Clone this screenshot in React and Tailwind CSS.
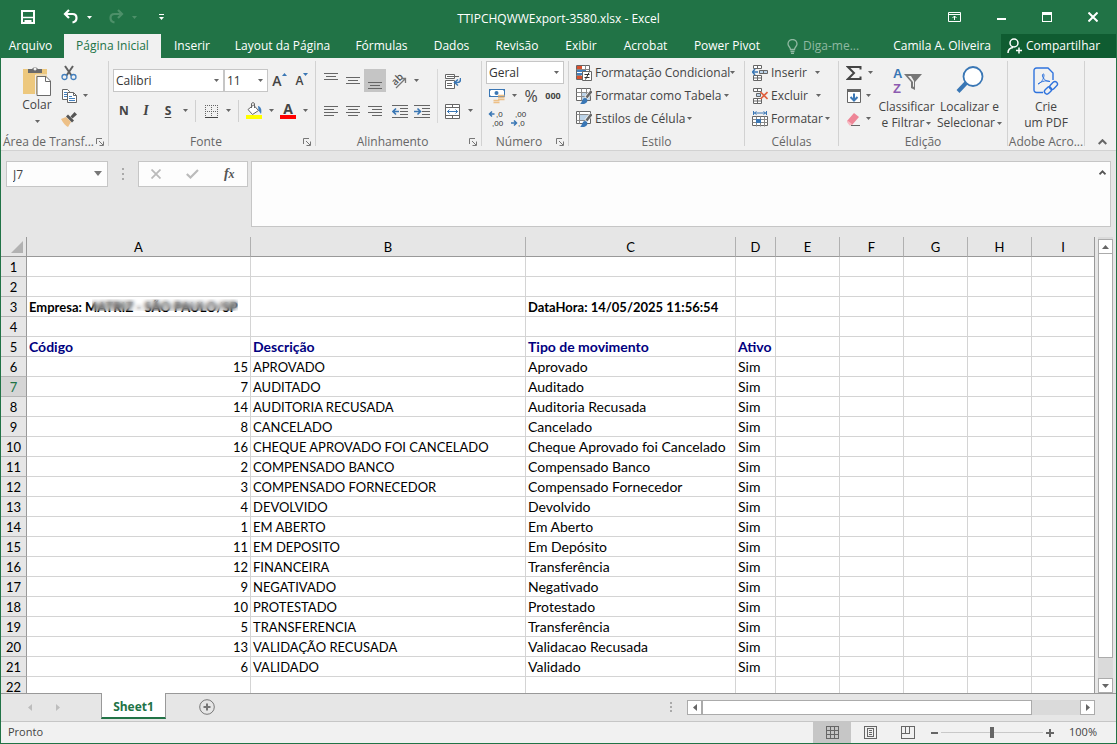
import { clsx } from 'clsx';

const columns = [
  { name: 'A', width: 'w-[224px]' },
  { name: 'B', width: 'w-[275px]' },
  { name: 'C', width: 'w-[210px]' },
  { name: 'D', width: 'w-10' },
  { name: 'E', width: 'w-16' },
  { name: 'F', width: 'w-16' },
  { name: 'G', width: 'w-16' },
  { name: 'H', width: 'w-16' },
  { name: 'I', width: '' },
];

const records = [
  [15, 'APROVADO', 'Aprovado'],
  [7, 'AUDITADO', 'Auditado'],
  [14, 'AUDITORIA RECUSADA', 'Auditoria Recusada'],
  [8, 'CANCELADO', 'Cancelado'],
  [16, 'CHEQUE APROVADO FOI CANCELADO', 'Cheque Aprovado foi Cancelado'],
  [2, 'COMPENSADO BANCO', 'Compensado Banco'],
  [3, 'COMPENSADO FORNECEDOR', 'Compensado Fornecedor'],
  [4, 'DEVOLVIDO', 'Devolvido'],
  [1, 'EM ABERTO', 'Em Aberto'],
  [11, 'EM DEPOSITO', 'Em Depósito'],
  [12, 'FINANCEIRA', 'Transferência'],
  [9, 'NEGATIVADO', 'Negativado'],
  [10, 'PROTESTADO', 'Protestado'],
  [5, 'TRANSFERENCIA', 'Transferência'],
  [13, 'VALIDAÇÃO RECUSADA', 'Validacao Recusada'],
  [6, 'VALIDADO', 'Validado'],
];

const tabs = [
  { label: 'Inserir', width: 'w-[62px]' },
  { label: 'Layout da Página', width: 'w-[119px]' },
  { label: 'Fórmulas', width: 'w-[79px]' },
  { label: 'Dados', width: 'w-[61px]' },
  { label: 'Revisão', width: 'w-[70px]' },
  { label: 'Exibir', width: 'w-[58px]' },
  { label: 'Acrobat', width: 'w-[71px]' },
  { label: 'Power Pivot', width: 'w-[92px]' },
];

/* ---------- small building blocks ---------- */

function Icon({ size = 'size-4', box = '0 0 16 16', children, ...rest }) {
  return (
    <svg className={clsx('shrink-0', size)} viewBox={box} fill="none" stroke="#666" aria-hidden="true" {...rest}>
      {children}
    </svg>
  );
}

function Caret({ className = 'text-[#666]' }) {
  return (
    <svg className={clsx('h-[3px] w-[5px] shrink-0', className)} viewBox="0 0 5 3" fill="currentColor" aria-hidden="true">
      <path d="M0 0h5L2.500 3z" />
    </svg>
  );
}

function Tool({ label, className = 'w-[22px]', children }) {
  return (
    <button type="button" aria-label={label} className={clsx('flex h-[23px] shrink-0 items-center justify-center', className)}>
      {children}
    </button>
  );
}

function Drop({ label, className = 'w-3' }) {
  return (
    <Tool label={label} className={className}>
      <Caret />
    </Tool>
  );
}

function Divider() {
  return <span className="mx-1 h-[22px] w-px shrink-0 bg-[#d0d0d0]" />;
}

function Combo({ label, value, className }) {
  return (
    <label className={clsx('relative block h-[23px] shrink-0', className)}>
      <select aria-label={label} className="h-full w-full appearance-none border border-[#c6c6c6] bg-white pl-[2px] text-[#333]">
        <option>{value}</option>
      </select>
      <span className="pointer-events-none absolute inset-y-0 right-[5px] flex items-center">
        <Caret />
      </span>
    </label>
  );
}

function Group({ label, launcher, className, children }) {
  return (
    <section className={clsx('flex h-[85px] shrink-0 flex-col border-r border-[#d2d2d2]', className)}>
      <div className="h-[77px]">{children}</div>
      <div className="flex h-2 items-center text-[#666]">
        <span className="flex-1 text-center leading-4 whitespace-nowrap">{label}</span>
        {launcher && (
          <button type="button" aria-label={`Opções de ${label}`} className="mr-1">
            <Icon size="size-2" box="0 0 8 8" stroke="#777">
              <path d="M.5 6V.5H6M3 3l4 4M7.500 3.500v4h-4" />
            </Icon>
          </button>
        )}
      </div>
    </section>
  );
}

function RowButton({ icon, label, gap = 'gap-[2px]' }) {
  return (
    <button type="button" className="flex h-[23px] items-center gap-[3px] whitespace-nowrap">
      {icon}
      <span className={clsx('flex items-center', gap)}>
        {label}
        <Caret />
      </span>
    </button>
  );
}

/* lines of text drawn at the given widths */
function Lines({ rows }) {
  return (
    <Icon shapeRendering="crispEdges">
      {rows.map(([x, y, w]) => (
        <path key={y} d={`M${x} ${y}.5h${w}`} />
      ))}
    </Icon>
  );
}

/* ---------- ribbon icons ---------- */

const PasteIcon = () => (
  <Icon size="h-8 w-7" box="0 0 28 32" stroke="none">
    <path d="M0 4h24v25H0z" fill="#edc87e" />
    <path d="M5 8V4h4a3.500 3.500 0 0 1 6 0h4v4z" fill="#6b6b6b" />
    <path d="M12 2.500a1.500 1.500 0 1 0 .1 0z" fill="#f1f1f1" />
    <path d="M14 11.500h9l4.500 4.500v14.500H14z" fill="#fff" stroke="#6b6b6b" />
    <path d="M22.500 11.500v5h5" stroke="#6b6b6b" fill="none" />
    <path d="M12.500 31V10H24" stroke="#f1f1f1" fill="none" />
  </Icon>
);

const CutIcon = () => (
  <Icon>
    <path d="M4 1l6.500 9.500M12 1L5.500 10.500" stroke="#606060" strokeWidth="2" />
    <circle cx="3.500" cy="12" r="2.500" stroke="#4480be" strokeWidth="1.300" />
    <circle cx="12.500" cy="12" r="2.500" stroke="#4480be" strokeWidth="1.300" />
  </Icon>
);

const CopyIcon = () => (
  <Icon>
    <path d="M1.500 1.500h5l2 2v8h-7z" fill="#fff" />
    <path d="M3 4.500h3M3 6.500h3M3 8.500h3" stroke="#4480be" />
    <path d="M6.500 4.500h6l3 3v7h-9z" fill="#fff" />
    <path d="M12.500 4.500v3h3" />
    <path d="M8 8.500h3M8 10.500h6M8 12.500h6" stroke="#4480be" />
  </Icon>
);

const BrushIcon = () => (
  <Icon stroke="none">
    <path d="M0 8l5-2 5 5-3 5c-2-1-5-4-7-8z" fill="#edc087" />
    <path d="M5 5.500l2-2 6 6-2 2z" fill="#555" />
    <path d="M9.500 5.500l4-4.500 2.500 2.500-4.500 4z" fill="#555" />
  </Icon>
);

const BorderIcon = () => (
  <Icon shapeRendering="crispEdges">
    <path d="M2 2.500h13M2 8.500h13M2.500 2v12M8.500 2v12M14.500 2v12" strokeDasharray="1 1" />
    <path d="M2 14.500h13" stroke="#444" />
  </Icon>
);

const BucketIcon = () => (
  <Icon size="h-[17px] w-4" box="0 0 16 17" stroke="none">
    <path d="M2 7.500l5.500-4.500 5 5.500-6 4z" fill="#fff" stroke="#666" />
    <path d="M5.500 6V1.500c0-1 3-1 3 0V6" stroke="#666" fill="none" />
    <path d="M12 4c3 .5 4 4 3 8l-2.500-3.500z" fill="#4480be" />
    <path d="M0 13h16v4H0z" fill="#ff0" />
  </Icon>
);

const OrientationIcon = () => (
  <Icon size="size-5" box="0 0 20 20">
    <text x="3" y="13" transform="rotate(-45 7 10)" fontSize="10" fontWeight="600" fill="#555" stroke="none">ab</text>
    <path d="M7 17l9-9M12 7.500h4.500V12" stroke="#777" strokeWidth="1.300" />
  </Icon>
);

const IndentIcon = ({ flip }) => (
  <Icon>
    <path d="M0 2.500h16M8 5.500h8M8 8.500h8M8 11.500h8M0 14.500h16" shapeRendering="crispEdges" />
    <path d={flip ? 'M0 8.500h6M3.500 5.500l3 3-3 3' : 'M1 8.500h6M4 5.500l-3 3 3 3'} stroke="#3a77b5" strokeWidth="1.600" />
  </Icon>
);

const WrapIcon = () => (
  <Icon>
    <path d="M.5 1.500h9v4h-9zM.5 7.500h9v8h-9z" fill="#fff" />
    <path d="M2 3.500h12M2 10.500h5M2 12.500h5" />
    <path d="M15.500 5v1.500c0 2-1 3-3 3H10M13 6.500l-3.500 3 3.500 3" stroke="#3a77b5" strokeWidth="1.500" />
  </Icon>
);

const MergeIcon = () => (
  <Icon>
    <path d="M.5 1.500h14v14H.5zM.5 4.500h14M.5 12.500h14M7.500 1.500v3M7.500 12.500v3" fill="#fff" />
    <path d="M2 8.500h11M4.500 6.500l-2 2 2 2M10.500 6.500l2 2-2 2" stroke="#3a77b5" />
  </Icon>
);

const MoneyIcon = () => (
  <Icon>
    <path d="M.5 1.500h15v7H.5z" fill="#fff" stroke="#3a77b5" />
    <path d="M0 1h3L0 4zM16 1h-3l3 3zM0 9h3L0 6z" fill="#3a77b5" stroke="none" />
    <circle cx="7.500" cy="5" r="2" fill="#3a77b5" stroke="none" />
    <path d="M9 7.500h6.500M9 9.500h6.500M9 11.500h6.500M4.500 12.500h6M4.500 14.500h6" stroke="#edc087" strokeWidth="1.500" />
  </Icon>
);

const DecimalIcon = ({ more }) => (
  <Icon size="h-5 w-[18px]" box="0 0 18 20" stroke="none" fill="#333" fontFamily="Liberation Sans" fontSize="8">
    <text x={more ? 8 : 5} y="8">{more ? ',0' : ',00'}</text>
    <text x={more ? 4 : 8} y="17">{more ? ',00' : ',0'}</text>
    <path
      d={more ? 'M1.500 5h5M4 2.500L1.500 5 4 7.500' : 'M1 14h5.500M4 11.500L6.500 14 4 16.500'}
      fill="none"
      stroke="#3a77b5"
      strokeWidth="1.500"
    />
  </Icon>
);

const ConditionalIcon = () => (
  <Icon>
    <path d="M.5.5h13v14H.5z" fill="#fff" />
    <path d="M1 1h5v3H1zM1 11h5v3H1z" fill="#d9502e" stroke="none" />
    <path d="M1 5h9v2H1zM1 8h5v2H1z" fill="#4480be" stroke="none" />
    <path d="M.5 4.500h13M9.500.5v4M.5 10.500h5" stroke="#888" />
    <path d="M6.500 6.500h9v9h-9z" fill="#fff" />
    <path d="M8.500 9.500h5M8.500 12.500h5M13 7.500l-3.500 7" stroke="#333" />
  </Icon>
);

const StyleIcon = ({ plain }) => (
  <Icon>
    <path d="M.5.5h14v12H.5z" fill="#fff" />
    <path d={plain ? 'M4 4h8v6H4z' : 'M5 4h9v8H5z'} fill="#bcd3e8" stroke="none" />
    <path d={plain ? 'M.5 3.500h14M3.500.5v12M.5 9.500h11' : 'M.5 4.500h14M.5 8.500h14M5.500.5v12M10.500.5v12'} stroke="#8a8a8a" />
    <path d="M15.500 3L10 10" stroke="#f1f1f1" strokeWidth="4" />
    <path d="M15.500 3L10.500 9.500" stroke="#666" strokeWidth="2.500" />
    <path d="M4 16c2-1 2-6 5-6 2 0 3 2 2 4-1.500 2-4 2.500-7 2z" fill="#3a77b5" stroke="none" />
  </Icon>
);

const InsertIcon = () => (
  <Icon>
    <path d="M1.500.5h8v3h-8zM5.500.5v3M1.500 10.500h8v5h-8zM5.500 10.500v5M1.500 13h8" fill="#fff" />
    <path d="M7.500 5.500h8v3h-8z" fill="#bcd3e8" />
    <path d="M11.500 5.500v3" />
    <path d="M0 7h6M3 4L.5 7 3 10" stroke="#3a77b5" strokeWidth="1.500" />
  </Icon>
);

const DeleteIcon = () => (
  <Icon>
    <path d="M1.500.5h8v3h-8zM5.500.5v3M1.500 10.500h8v5h-8zM5.500 10.500v5M1.500 13h8" fill="#fff" />
    <path d="M4.500 5.500h4v3h-4z" fill="#bcd3e8" />
    <path d="M8.500 4l7 7M15.500 4l-7 7" stroke="#e0603f" strokeWidth="1.600" />
  </Icon>
);

const FormatIcon = () => (
  <Icon>
    <path d="M1 2h13M1.500 0v4M14.500 0v4M4.500.5L2.500 2l2 1.500M11.500.5l2 1.500-2 1.500" stroke="#3a77b5" />
    <path d="M.5 5.500h15v9H.5z" fill="#fff" />
    <path d="M.5 8.500h15M.5 11.500h15M4.500 5.500v10M8.500 5.500v10M12.500 5.500v10" stroke="#888" />
    <path d="M4 8h5v4H4z" fill="#3a77b5" stroke="none" />
  </Icon>
);

const FillIcon = () => (
  <Icon>
    <path d="M1.500 1.500h13v13h-13z" fill="#fff" />
    <path d="M1 1h14v3H1z" fill="#666" stroke="none" />
    <path d="M8 5.500v7M4.500 9L8 12.500 11.500 9" stroke="#3a77b5" strokeWidth="2" />
  </Icon>
);

const EraserIcon = () => (
  <Icon stroke="none">
    <path d="M1 10l7-8 5 4-7 8H4z" fill="#ee8596" />
    <path d="M1.500 9.500L6 13l-1 1.500H3.500L1 11z" fill="#f7b9c2" />
    <path d="M5 14.500h9" stroke="#666" />
  </Icon>
);

const SortIcon = () => (
  <Icon size="h-[30px] w-[30px]" box="0 0 30 30" stroke="none" fontFamily="Liberation Sans" fontWeight="bold" fontSize="13">
    <text x="1" y="12" fill="#3a77b5">A</text>
    <text x="1" y="27" fill="#8c5bb0">Z</text>
    <path d="M12 8h18l-7 8v8l-4-2v-6z" fill="#777" />
    <path d="M16 10h3l3 5v6l-1-.5V16z" fill="#f1f1f1" />
  </Icon>
);

const FindIcon = () => (
  <Icon size="h-[30px] w-[30px]" box="0 0 30 30">
    <path d="M12 16L3 25.500" stroke="#3a77b5" strokeWidth="4" />
    <circle cx="18" cy="10.500" r="9.500" fill="#fff" stroke="#3a77b5" strokeWidth="1.800" />
  </Icon>
);

const PdfIcon = () => (
  <Icon size="h-[30px] w-[26px]" box="0 0 26 30" stroke="#2f73dd" strokeWidth="1.400">
    <path d="M10 25.500H3.500c-1.500 0-2.500-1-2.500-2.500V3.500C1 2 2 1 3.500 1H15l5 5v6M20 6v7" />
    <path d="M5 17c3-1 6-5 6-9 0-2-2-1-1.500 1 .8 3 4 6 7.500 5.500-3-1.500-8-.5-12 2.500z" strokeWidth="1" />
    <rect x="11" y="21" width="8" height="5" rx="2.500" transform="rotate(-45 15 23.500)" />
    <rect x="16" y="16" width="9" height="5" rx="2.500" transform="rotate(-45 20.500 18.500)" />
  </Icon>
);

/* ---------- page regions ---------- */

function TitleBar() {
  return (
    <header className="grid h-[34px] grid-cols-[1fr_auto_1fr] items-center text-white">
      <div className="flex items-center pl-5">
        <button type="button" aria-label="Salvar" className="mr-7">
          <Icon size="size-[14px]" box="0 0 14 14" stroke="#fff">
            <path d="M1 1h12v12H1z" strokeWidth="2" />
            <path d="M2 7.500h10" strokeWidth="1.500" />
            <path d="M3.500 10h7v4h-2v-2H6v2H3.500z" fill="#fff" stroke="none" />
          </Icon>
        </button>
        <button type="button" aria-label="Desfazer" className="mr-2">
          <Icon stroke="#fff" strokeWidth="2.200">
            <path d="M6 1L2 5l4 4M2 5h7.500c2.500 0 4 1.500 4 4s-1.500 4-4 4.500" />
          </Icon>
        </button>
        <Caret className="mr-4 text-white" />
        <button type="button" aria-label="Refazer" className="mr-2">
          <Icon stroke="#4d9069" strokeWidth="2.200">
            <path d="M10 1l4 4-4 4M14 5H6.500c-2.500 0-4 1.500-4 4s1.500 4 4 4.500" />
          </Icon>
        </button>
        <Caret className="mr-[22px] text-[#4d9069]" />
        <button type="button" aria-label="Personalizar" className="flex flex-col items-center gap-[2px]">
          <span className="h-px w-[5px] bg-white" />
          <Caret className="text-white" />
        </button>
      </div>
      <h1 className="pt-[3px]">TTIPCHQWWExport-3580.xlsx - Excel</h1>
      <div className="flex items-center justify-end gap-9 pr-[18px]">
        <button type="button" aria-label="Opções da faixa">
          <Icon size="h-[10px] w-[13px]" box="0 0 13 10" stroke="#fff">
            <path d="M.5.500h12v9H.5zM.5 2.500h12M6.500 8V4M4.500 6l2-2 2 2" />
          </Icon>
        </button>
        <button type="button" aria-label="Minimizar" className="flex h-[10px] w-[9px] items-end">
          <span className="mb-[2px] h-[2px] w-full bg-white" />
        </button>
        <button type="button" aria-label="Maximizar" className="h-[10px] w-[10px] border border-t-3 border-white" />
        <button type="button" aria-label="Fechar">
          <Icon size="size-[10px]" box="0 0 10 10" stroke="#fff" strokeWidth="2">
            <path d="M.5.500l9 9M9.500.500l-9 9" />
          </Icon>
        </button>
      </div>
    </header>
  );
}

function RibbonTabs() {
  return (
    <nav className="flex h-6 items-stretch whitespace-nowrap text-white">
      <button type="button" className="w-[63px] pr-1">Arquivo</button>
      <button type="button" className="w-[97px] bg-[#f1f1f1] text-[#217346]">Página Inicial</button>
      {tabs.map(({ label, width }) => (
        <button type="button" key={label} className={clsx('flex items-center justify-center', width)}>{label}</button>
      ))}
      <button type="button" className="ml-[14px] flex items-center gap-[5px] text-[#90b9a2]">
        <Icon size="h-[15px] w-[11px]" box="0 0 11 15" stroke="#90b9a2" strokeWidth="1.300">
          <path d="M3.500 10.500C3.500 8 1 7.500 1 5a4.500 4.500 0 0 1 9 0c0 2.500-2.500 3-2.500 5.500zM3.500 12.500h4M4 14.300h3" />
        </Icon>
        Diga-me...
      </button>
      <button type="button" className="mr-[10px] ml-auto">Camila A. Oliveira</button>
      <button type="button" className="flex w-[115px] items-center gap-1 bg-[#0f5c31] pl-[6px]">
        <Icon size="h-4 w-[15px]" box="0 0 15 16" stroke="#fff" strokeWidth="1.500">
          <circle cx="7" cy="5" r="4" />
          <path d="M1 15c0-3 2-5 5-5.500M9 12.500h6M12 9.500v6" />
        </Icon>
        Compartilhar
      </button>
    </nav>
  );
}

function Ribbon() {
  return (
    <div className="flex h-[93px] items-start border-b border-[#d2d2d2] bg-[#f1f1f1] pt-[3px] text-[#444]">
      <Group label="Área de Transf..." launcher className="w-[108px]">
        <div className="flex gap-1 pl-4">
          <button type="button" className="flex w-10 flex-col items-center pt-1 leading-4">
            <PasteIcon />
            Colar
            <span className="flex h-4 items-center"><Caret /></span>
          </button>
          <div>
            <Tool label="Recortar" className="w-4"><CutIcon /></Tool>
            <div className="flex">
              <Tool label="Copiar" className="w-4"><CopyIcon /></Tool>
              <Drop label="Opções de copiar" className="w-4" />
            </div>
            <Tool label="Pincel de formatação" className="w-4"><BrushIcon /></Tool>
          </div>
        </div>
      </Group>

      <Group label="Fonte" launcher className="w-[207px]">
        <div className="space-y-[7px] pt-2 pl-1">
          <div className="flex">
            <Combo label="Fonte" value="Calibri" className="w-[111px]" />
            <Combo label="Tamanho da fonte" value="11" className="w-11" />
            <Tool label="Aumentar fonte" className="w-[23px] text-sm font-semibold">
              A<svg className="mb-3 h-[3px] w-[5px]" viewBox="0 0 5 3" fill="#3a77b5"><path d="M0 3h5L2.500 0z" /></svg>
            </Tool>
            <Tool label="Diminuir fonte" className="w-[22px] text-xs font-semibold">
              A<Caret className="mb-3 text-[#3a77b5]" />
            </Tool>
          </div>
          <div className="flex items-center">
            <Tool label="Negrito"><b>N</b></Tool>
            <Tool label="Itálico"><i className="font-['Liberation_Serif'] text-sm font-bold">I</i></Tool>
            <Tool label="Sublinhado"><span className="font-bold underline underline-offset-2">S</span></Tool>
            <Drop label="Opções de sublinhado" />
            <Divider />
            <Tool label="Bordas"><BorderIcon /></Tool>
            <Drop label="Opções de bordas" />
            <Divider />
            <Tool label="Cor de preenchimento"><BucketIcon /></Tool>
            <Drop label="Opções de preenchimento" />
            <Tool label="Cor da fonte" className="w-[22px] flex-col">
              <span className="text-sm leading-3 font-bold">A</span>
              <span className="h-1 w-4 bg-[#f00]" />
            </Tool>
            <Drop label="Opções de cor" />
          </div>
        </div>
      </Group>

      <Group label="Alinhamento" launcher className="w-[166px]">
        <div className="flex pt-2 pl-1">
          <div className="w-[117px] space-y-[7px]">
            <div className="flex">
              <Tool label="Em cima"><Lines rows={[[1, 0, 14], [3, 3, 10], [1, 6, 14]]} /></Tool>
              <Tool label="No meio"><Lines rows={[[1, 4, 14], [3, 7, 10], [1, 10, 14]]} /></Tool>
              <Tool label="Embaixo" className="w-[22px] bg-[#c5c5c5]"><Lines rows={[[1, 9, 14], [3, 12, 10], [1, 15, 14]]} /></Tool>
              <Tool label="Orientação" className="w-[26px]"><OrientationIcon /></Tool>
              <Drop label="Opções de orientação" className="w-2" />
            </div>
            <div className="flex">
              <Tool label="À esquerda"><Lines rows={[[1, 3, 14], [1, 6, 10], [1, 9, 14], [1, 12, 10]]} /></Tool>
              <Tool label="Centralizar"><Lines rows={[[1, 3, 14], [3, 6, 10], [1, 9, 14], [3, 12, 10]]} /></Tool>
              <Tool label="À direita" className="mr-[3px] w-[22px]"><Lines rows={[[1, 3, 14], [5, 6, 10], [1, 9, 14], [5, 12, 10]]} /></Tool>
              <Tool label="Diminuir recuo"><IndentIcon /></Tool>
              <Tool label="Aumentar recuo"><IndentIcon flip /></Tool>
            </div>
          </div>
          <span className="mr-1 h-[54px] w-px bg-[#d8d8d8]" />
          <div className="space-y-[7px]">
            <Tool label="Quebrar texto"><WrapIcon /></Tool>
            <div className="flex">
              <Tool label="Mesclar e centralizar"><MergeIcon /></Tool>
              <Drop label="Opções de mesclar" />
            </div>
          </div>
        </div>
      </Group>

      <Group label="Número" launcher className="w-[87px]">
        <div className="pl-1">
          <Combo label="Formato" value="Geral" className="w-[78px]" />
          <div className="flex">
            <Tool label="Moeda"><MoneyIcon /></Tool>
            <Drop label="Opções de moeda" />
            <Tool label="Porcentagem"><span className="text-base">%</span></Tool>
            <Tool label="Separador de milhares"><span className="text-[9px] font-bold">000</span></Tool>
          </div>
          <div className="flex">
            <Tool label="Aumentar casas decimais"><DecimalIcon more /></Tool>
            <Tool label="Diminuir casas decimais"><DecimalIcon /></Tool>
          </div>
        </div>
      </Group>

      <Group label="Estilo" className="w-[176px]">
        <div className="pl-[7px]">
          <RowButton icon={<ConditionalIcon />} label="Formatação Condicional" gap="gap-0" />
          <RowButton icon={<StyleIcon />} label="Formatar como Tabela" />
          <RowButton icon={<StyleIcon plain />} label="Estilos de Célula" />
        </div>
      </Group>

      <Group label="Células" className="w-[94px]">
        <div className="pl-[7px]">
          <RowButton icon={<InsertIcon />} label="Inserir" gap="gap-2" />
          <RowButton icon={<DeleteIcon />} label="Excluir" gap="gap-2" />
          <RowButton icon={<FormatIcon />} label="Formatar" />
        </div>
      </Group>

      <Group label="Edição" className="w-[169px]">
        <div className="flex pl-[7px]">
          <div className="w-[29px]">
            <div className="flex">
              <Tool label="AutoSoma" className="w-4">
                <Icon stroke="#444" strokeWidth="2">
                  <path d="M14.500 4.500V2H2l6 6-6 6h12.500v-2.500" />
                </Icon>
              </Tool>
              <Drop label="Opções de soma" className="w-4" />
            </div>
            <div className="flex">
              <Tool label="Preencher" className="w-4"><FillIcon /></Tool>
              <Drop label="Opções de preencher" />
            </div>
            <div className="flex">
              <Tool label="Limpar" className="w-4"><EraserIcon /></Tool>
              <Drop label="Opções de limpar" />
            </div>
          </div>
          <button type="button" className="flex w-[63px] flex-col items-center pt-[5px] leading-4 whitespace-nowrap">
            <SortIcon />
            <span className="pt-[3px]">Classificar</span>
            <span className="flex items-center gap-[2px]">e Filtrar <Caret /></span>
          </button>
          <button type="button" className="flex w-[63px] flex-col items-center pt-[5px] leading-4 whitespace-nowrap">
            <FindIcon />
            <span className="pt-[3px]">Localizar e</span>
            <span className="flex items-center gap-[2px]">Selecionar <Caret /></span>
          </button>
        </div>
      </Group>

      <Group label="Adobe Acro..." className="w-[77px]">
        <button type="button" className="flex w-full flex-col items-center pt-[6px] leading-4">
          <PdfIcon />
          <span className="pt-[2px]">Crie</span>
          <span>um PDF</span>
        </button>
      </Group>

      <button type="button" aria-label="Recolher faixa" className="mr-[9px] mb-[5px] ml-auto self-end">
        <Icon size="h-[6px] w-[9px]" box="0 0 9 6" strokeWidth="2"><path d="M.7 5l3.800-3.800L8.300 5" /></Icon>
      </button>
    </div>
  );
}

function FormulaBar() {
  return (
    <div className="flex items-start pt-[10px] pr-[5px] pb-[10px] pl-[5px]">
      <label className="relative block">
        <input aria-label="Caixa de nome" defaultValue="J7" className="block h-[26px] w-[102px] border border-[#c6c6c6] bg-[#fdfdfd] pl-[6px] text-[#444]" />
        <span className="absolute top-[10px] right-[6px]">
          <svg className="h-[5px] w-2" viewBox="0 0 8 5" fill="#777"><path d="M0 0h8L4 5z" /></svg>
        </span>
      </label>
      <span className="mx-[14px] flex h-[26px] w-[2px] flex-col justify-center gap-[3px]">
        <i className="h-[2px] bg-[#aaa]" />
        <i className="h-[2px] bg-[#aaa]" />
        <i className="h-[2px] bg-[#aaa]" />
      </span>
      <div className="mr-[3px] flex h-[26px] w-[110px] items-center justify-around border border-[#c6c6c6] bg-[#fdfdfd]">
        <button type="button" aria-label="Cancelar">
          <Icon size="size-[10px]" box="0 0 10 10" stroke="#bbb" strokeWidth="1.800"><path d="M.5.500l9 9M9.500.500l-9 9" /></Icon>
        </button>
        <button type="button" aria-label="Inserir">
          <Icon size="h-[10px] w-[13px]" box="0 0 13 10" stroke="#bbb" strokeWidth="2.200"><path d="M.8 5l3.700 3.500L12 1" /></Icon>
        </button>
        <button type="button" aria-label="Inserir função" className="font-['Liberation_Serif'] text-sm leading-none font-bold text-[#555] italic">
          f<span className="text-xs">x</span>
        </button>
      </div>
      <label className="relative block flex-1">
        <textarea aria-label="Barra de fórmulas" className="block h-[66px] w-full resize-none border border-[#c6c6c6] bg-[#fdfdfd] px-1" />
        <span className="absolute top-[9px] right-[5px]">
          <Icon size="h-[5px] w-[7px]" box="0 0 7 5" stroke="#555" strokeWidth="1.800"><path d="M.5 4.300l3-3 3 3" /></Icon>
        </span>
      </label>
    </div>
  );
}

function SheetRow({ number, cells = [] }) {
  return (
    <tr className="h-5">
      <th
        scope="row"
        className={clsx(
          'border-r border-b border-r-[#999] border-b-[#b5b5b5] px-0 pt-[2px] pb-0 text-center font-normal',
          number === 7 ? 'bg-[#d5d5d5] text-[#217346]' : 'bg-[#e6e6e6]',
        )}
      >
        {number}
      </th>
      {columns.map(({ name }, i) => {
        const large = number === 5 || (number > 5 && i > 1);
        return (
          <td
            key={name}
            className={clsx(
              'border-r border-b border-[#d4d4d4] px-[2px] pb-0 whitespace-nowrap last:border-r-0',
              large ? 'pt-0 text-sm leading-[19px]' : 'pt-[2px]',
              typeof cells[i] === 'number' && 'text-right',
              number === 5 && 'font-bold text-[#000080]',
            )}
          >
            {cells[i]}
          </td>
        );
      })}
    </tr>
  );
}

function Sheet() {
  const company = (
    <span className="relative font-bold">
      Empresa: MATRIZ - SÃO PAULO/SP
      <span className="absolute top-0 right-0 left-[63px] h-3 backdrop-blur-[2px]" />
    </span>
  );
  const stamp = <b>DataHora: 14/05/2025 11:56:54</b>;

  return (
    <div className="flex min-h-0 flex-1 gap-[3px] pr-[3px]">
      <div className="min-w-0 flex-1 overflow-hidden border-r border-[#999]">
        <table className="w-full table-fixed border-separate border-spacing-0 bg-white font-['Lato',sans-serif] text-[13px] leading-[17px] text-black">
          <colgroup>
            <col className="w-[26px]" />
            {columns.map(({ name, width }) => <col key={name} className={width} />)}
          </colgroup>
          <thead>
            <tr className="h-5 bg-[#e6e6e6]">
              <th aria-label="Selecionar tudo" className="border-r border-b border-[#999] p-0">
                <svg className="ml-[10px] size-3" viewBox="0 0 12 12" fill="#b2b2b2"><path d="M12 0v12H0z" /></svg>
              </th>
              {columns.map(({ name }) => (
                <th key={name} scope="col" className="border-r border-b border-r-[#b0b0b0] border-b-[#999] px-0 pt-[2px] pb-0 font-normal last:border-r-0">{name}</th>
              ))}
            </tr>
          </thead>
          <tbody>
            <SheetRow number={1} />
            <SheetRow number={2} />
            <SheetRow number={3} cells={[company, '', stamp]} />
            <SheetRow number={4} />
            <SheetRow number={5} cells={['Código', 'Descrição', 'Tipo de movimento', 'Ativo']} />
            {records.map((record, i) => (
              <SheetRow key={record[0]} number={i + 6} cells={[...record, 'Sim']} />
            ))}
            <SheetRow number={22} />
          </tbody>
        </table>
      </div>
      <div className="flex w-[15px] flex-col bg-[#dadada] pt-[2px]">
        <ScrollButton label="Rolar para cima" d="M0 4h7L3.500 0z" box="0 0 7 4" size="h-1 w-[7px]" />
        <div className="-mt-px h-[405px] border border-[#ababab] bg-white" />
        <div className="flex-1" />
        <ScrollButton label="Rolar para baixo" d="M0 0h7L3.500 4z" box="0 0 7 4" size="h-1 w-[7px]" />
      </div>
    </div>
  );
}

function ScrollButton({ label, d, box, size }) {
  return (
    <button type="button" aria-label={label} className="flex size-[15px] shrink-0 items-center justify-center border border-[#ababab] bg-white">
      <svg className={size} viewBox={box} fill="#666"><path d={d} /></svg>
    </button>
  );
}

function SheetTabs() {
  return (
    <div className="flex h-7 items-start border-t border-[#999] pr-[21px]">
      <div className="flex h-[26px] w-[100px] items-center gap-6 pl-[27px]">
        <button type="button" aria-label="Planilha anterior">
          <svg className="h-[7px] w-1" viewBox="0 0 4 7" fill="#bdbdbd"><path d="M4 0v7L0 3.500z" /></svg>
        </button>
        <button type="button" aria-label="Próxima planilha">
          <svg className="h-[7px] w-1" viewBox="0 0 4 7" fill="#bdbdbd"><path d="M0 0v7l4-3.500z" /></svg>
        </button>
      </div>
      <button type="button" className="-mt-px h-[26px] w-[65px] border-x border-b-2 border-x-[#999] border-b-[#217346] bg-white pt-[3px] text-xs font-bold text-[#217346]">
        Sheet1
      </button>
      <button type="button" aria-label="Nova planilha" className="mt-[5px] ml-[33px]">
        <Icon box="0 0 16 16" stroke="#777">
          <circle cx="8" cy="8" r="7.300" />
          <path d="M8 4.500v7M4.500 8h7" strokeWidth="2" />
        </Icon>
      </button>
      <span className="mt-2 mr-[15px] ml-auto flex w-[2px] flex-col gap-[2px]">
        <i className="h-[2px] bg-[#aaa]" />
        <i className="h-[2px] bg-[#aaa]" />
        <i className="h-[2px] bg-[#aaa]" />
      </span>
      <div className="mt-[6px] flex w-2/5 max-w-[408px] bg-[#dadada]">
        <ScrollButton label="Rolar para a esquerda" d="M4 0v7L0 3.500z" box="0 0 4 7" size="h-[7px] w-1" />
        <div className="w-[330px] border border-[#ababab] bg-white" />
        <div className="flex-1" />
        <ScrollButton label="Rolar para a direita" d="M0 0v7l4-3.500z" box="0 0 4 7" size="h-[7px] w-1" />
      </div>
    </div>
  );
}

function StatusBar() {
  return (
    <footer className="flex h-[22px] items-stretch border-t border-[#c6c6c6] bg-[#f1f1f1] pr-[19px] text-[#444]">
      <span className="pl-[7px] text-[11px] leading-5">Pronto</span>
      <button type="button" aria-label="Normal" className="ml-auto flex w-[38px] items-center justify-center bg-[#c6c6c6]">
        <Icon size="h-[13px] w-[13px]" box="0 0 13 13" shapeRendering="crispEdges">
          <path d="M.5.500h12v12H.5zM.5 4.500h12M.5 8.500h12M4.500.500v12M8.500.500v12" />
        </Icon>
      </button>
      <button type="button" aria-label="Layout da página" className="flex w-[38px] items-center justify-center">
        <Icon size="size-[13px]" box="0 0 13 13" shapeRendering="crispEdges">
          <path d="M.5.500h12v12H.5zM3.500 2.500h6v8h-6zM5 4.500h3M5 6.500h3M5 8.500h3" />
        </Icon>
      </button>
      <button type="button" aria-label="Quebra de página" className="flex w-[38px] items-center justify-center">
        <Icon size="h-[13px] w-[14px]" box="0 0 14 13" shapeRendering="crispEdges">
          <path d="M.5.500h13v12H.5zM.5 7.500h8M4.500.500v7M8.500.500v7" />
        </Icon>
      </button>
      <button type="button" aria-label="Reduzir" className="mr-[3px] ml-1 h-[2px] w-[7px] self-center bg-[#666]" />
      <input
        type="range"
        aria-label="Zoom"
        defaultValue="50"
        className="h-[11px] w-[102px] appearance-none self-center bg-linear-to-b from-transparent from-45% via-[#a0a0a0] via-45% to-transparent to-55% [&::-webkit-slider-thumb]:h-[11px] [&::-webkit-slider-thumb]:w-1 [&::-webkit-slider-thumb]:appearance-none [&::-webkit-slider-thumb]:bg-[#666]"
      />
      <button type="button" aria-label="Ampliar" className="mr-[15px] ml-[3px]">
        <Icon size="size-2" box="0 0 8 8" strokeWidth="2"><path d="M4 0v8M0 4h8" /></Icon>
      </button>
      <span className="text-[11px] leading-5">100%</span>
    </footer>
  );
}

export default function App() {
  return (
    <div className="flex h-screen flex-col overflow-hidden border border-t-0 border-[#217346] bg-[#e6e6e6] font-['Open_Sans',sans-serif] text-xs">
      <div className="bg-[#217346]">
        <TitleBar />
        <RibbonTabs />
      </div>
      <Ribbon />
      <FormulaBar />
      <Sheet />
      <SheetTabs />
      <StatusBar />
    </div>
  );
}
